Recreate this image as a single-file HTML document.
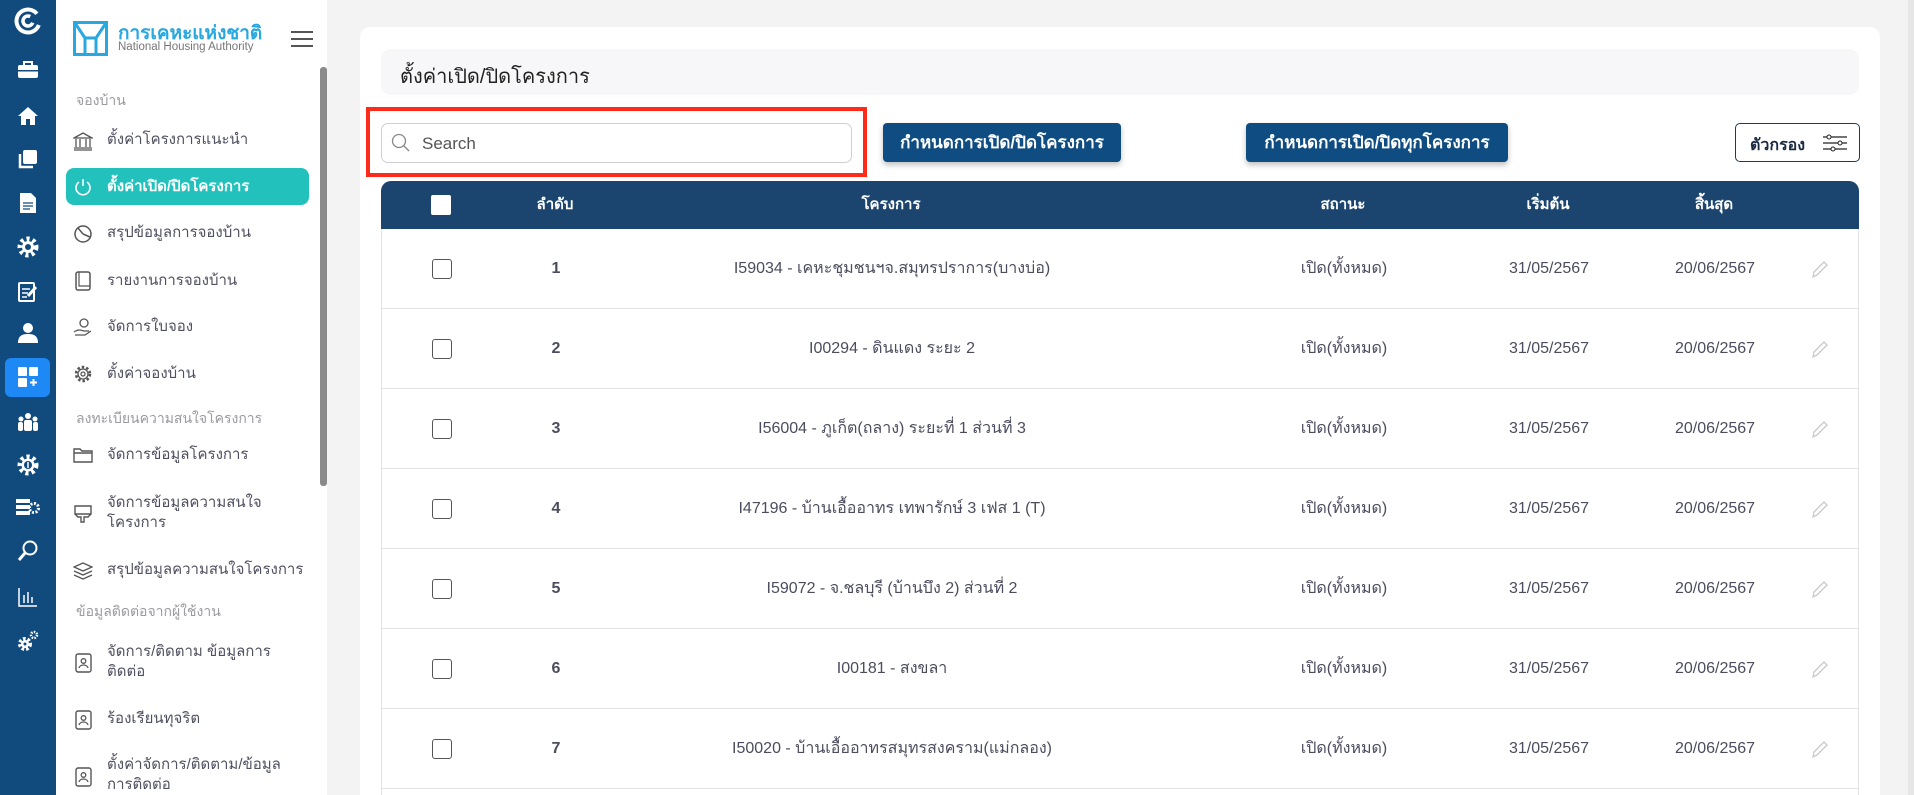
<!DOCTYPE html>
<html style="width:1914px;height:795px;overflow:hidden"><head><meta charset="utf-8">
<style>
*{box-sizing:border-box;margin:0;padding:0}
body{width:1914px;height:795px;overflow:hidden;background:#f3f3f4;font-family:"Liberation Sans","Noto Sans CJK SC",sans-serif;position:relative}
.rail{position:absolute;left:0;top:0;width:56px;height:795px;background:#114b7e}
.ri{position:absolute;left:0;width:56px;display:flex;justify-content:center;align-items:center}
.side{position:absolute;left:56px;top:0;width:271px;height:795px;background:#fff}
.sb{position:absolute;left:320px;top:67px;width:7px;height:419px;background:#8a8a8a;border-radius:3px}
.sec{position:absolute;left:76px;font-size:14px;color:#9a9aa0}
.it{position:absolute;left:107px;font-size:15px;color:#4f5060;line-height:20px}
.ic{position:absolute;left:73px;width:20px;height:20px}
.active{position:absolute;left:66px;top:168px;width:243px;height:37px;background:#22c1bc;border-radius:8px}
.card{position:absolute;left:360px;top:27px;width:1520px;height:768px;background:#fff;border-radius:10px 10px 0 0}
.title{position:absolute;left:381px;top:49px;width:1478px;height:46px;background:#f7f7f9;border-radius:10px;font-size:20px;color:#222;padding:11px 0 0 19px}
.red{position:absolute;left:366px;top:107px;width:501px;height:70px;border:4px solid #ff2a1a}
.search{position:absolute;left:381px;top:123px;width:471px;height:40px;border:1px solid #cfcfd4;border-radius:7px;font-size:17px;color:#555;padding:10px 0 0 40px}
.btn{position:absolute;top:123px;height:39px;background:#0f4c81;color:#fff;font-weight:bold;font-size:17px;border-radius:4px;display:flex;align-items:center;justify-content:center;box-shadow:0 3px 6px rgba(0,0,0,.25)}
.filter{position:absolute;left:1735px;top:123px;width:125px;height:39px;border:1.5px solid #1a3b5e;border-radius:5px;font-size:16px;font-weight:bold;color:#1a2a44;padding:9px 0 0 14px}
.thead{position:absolute;left:381px;top:181px;width:1478px;height:48px;background:#1b456e;border-radius:10px 10px 0 0;color:#fff;font-weight:bold;font-size:15px}
.tbody{position:absolute;left:381px;top:229px;width:1478px;height:566px;border-left:1px solid #e2e2e6;border-right:1px solid #e2e2e6;overflow:hidden}
.c{position:absolute;transform:translateX(-50%);white-space:nowrap;line-height:20px}
.row{position:absolute;left:0;width:1476px;height:80px;border-bottom:1.5px solid #e2e2e6;font-size:16px;color:#4b4c5e}
.row .c{top:30px}
.cb{position:absolute;left:50px;top:30px;width:20px;height:20px;border:1.5px solid #555;border-radius:3px;background:#fff}
</style></head><body>
<div class="rail">
 <div class="ri" style="top:6px;height:30px"><svg width="30" height="30" viewBox="0 0 30 30"><circle cx="15" cy="15" r="11.5" fill="none" stroke="#fff" stroke-width="4" stroke-dasharray="60 12" transform="rotate(20 15 15)"/><circle cx="15" cy="15" r="5" fill="none" stroke="#fff" stroke-width="3.5" stroke-dasharray="24 8" transform="rotate(20 15 15)"/></svg></div>
 <div class="ri" style="top:60px;height:20px"><svg width="22" height="18"><rect x="1" y="4" width="20" height="13" rx="2" fill="#fff"/><rect x="7" y="1" width="8" height="4" fill="none" stroke="#fff" stroke-width="2"/><rect x="1" y="9" width="20" height="1.5" fill="#114b7e"/></svg></div>
 <div class="ri" style="top:105px;height:22px"><svg width="22" height="20"><path d="M11 1L1 10h3v9h5v-6h4v6h5v-9h3z" fill="#fff"/></svg></div>
 <div class="ri" style="top:149px;height:20px"><svg width="20" height="20"><rect x="5" y="1" width="14" height="14" rx="2" fill="#fff"/><path d="M2 5v13h13" fill="none" stroke="#fff" stroke-width="2.5"/></svg></div>
 <div class="ri" style="top:192px;height:22px"><svg width="18" height="22"><path d="M1 1h11l5 5v15H1z" fill="#fff"/><path d="M4 11h10M4 14h10M4 17h7" stroke="#114b7e" stroke-width="1.3"/></svg></div>
 <div class="ri" style="top:236px;height:22px"><svg width="22" height="22"><circle cx="11" cy="11" r="8" fill="none" stroke="#fff" stroke-width="5" stroke-dasharray="3 3"/><circle cx="11" cy="11" r="6" fill="#fff"/><circle cx="11" cy="11" r="3" fill="#114b7e"/></svg></div>
 <div class="ri" style="top:280px;height:22px"><svg width="22" height="22"><rect x="2" y="3" width="15" height="18" rx="1" fill="none" stroke="#fff" stroke-width="2"/><path d="M5 9h8M5 13h6M5 17h5" stroke="#fff" stroke-width="1.5"/><path d="M19 7l-8 9" stroke="#fff" stroke-width="3"/></svg></div>
 <div class="ri" style="top:322px;height:22px"><svg width="22" height="22"><circle cx="11" cy="6" r="5" fill="#fff"/><path d="M1 21c0-7 4-9 10-9s10 2 10 9z" fill="#fff"/></svg></div>
 <div style="position:absolute;left:5px;top:358px;width:45px;height:39px;background:#1e88f5;border-radius:6px"></div>
 <div class="ri" style="top:367px;height:20px"><svg width="20" height="20"><rect x="0" y="0" width="9" height="9" rx="1" fill="#fff"/><rect x="11" y="0" width="9" height="9" rx="1" fill="#fff"/><rect x="0" y="11" width="9" height="9" rx="1" fill="#fff"/><path d="M15.5 12v7M12 15.5h7" stroke="#fff" stroke-width="2"/></svg></div>
 <div class="ri" style="top:412px;height:20px"><svg width="22" height="20"><circle cx="11" cy="4" r="3" fill="#fff"/><circle cx="4" cy="7" r="2.5" fill="#fff"/><circle cx="18" cy="7" r="2.5" fill="#fff"/><rect x="7" y="8" width="8" height="11" rx="2" fill="#fff"/><rect x="1" y="10" width="5" height="9" rx="2" fill="#fff"/><rect x="16" y="10" width="5" height="9" rx="2" fill="#fff"/></svg></div>
 <div class="ri" style="top:454px;height:22px"><svg width="22" height="22"><circle cx="11" cy="11" r="8" fill="none" stroke="#fff" stroke-width="5" stroke-dasharray="3 3"/><circle cx="11" cy="11" r="6.5" fill="#fff"/><circle cx="11" cy="11" r="4" fill="#114b7e"/><path d="M11 8v6" stroke="#fff" stroke-width="1.5"/></svg></div>
 <div class="ri" style="top:497px;height:20px"><svg width="24" height="20"><rect x="0" y="2" width="14" height="4" fill="#fff"/><rect x="0" y="8" width="14" height="4" fill="#fff"/><rect x="0" y="14" width="14" height="4" fill="#fff"/><circle cx="18" cy="11" r="4.5" fill="none" stroke="#fff" stroke-width="3" stroke-dasharray="2 1.5"/></svg></div>
 <div class="ri" style="top:540px;height:22px"><svg width="22" height="22"><circle cx="13" cy="8" r="6.5" fill="none" stroke="#fff" stroke-width="2"/><path d="M8 13L2 20" stroke="#fff" stroke-width="3"/></svg></div>
 <div class="ri" style="top:586px;height:22px"><svg width="20" height="20"><path d="M1 1v18h18M6 16V8M10 16V5M14 16V10" stroke="#fff" stroke-width="1.5" fill="none"/></svg></div>
 <div class="ri" style="top:630px;height:22px"><svg width="22" height="22"><circle cx="8" cy="14" r="5" fill="none" stroke="#fff" stroke-width="4" stroke-dasharray="2.5 1.8"/><circle cx="8" cy="14" r="4" fill="#fff"/><circle cx="8" cy="14" r="1.5" fill="#114b7e"/><circle cx="17" cy="5" r="3" fill="none" stroke="#fff" stroke-width="2.5" stroke-dasharray="1.5 1.2"/></svg></div>
</div>

<div class="side">
 <svg style="position:absolute;left:17px;top:21px" width="35" height="35" viewBox="0 0 35 35"><rect x="1.5" y="1.5" width="32" height="32" fill="none" stroke="#29a8e0" stroke-width="3"/><path d="M2 2L12 17v16M33 2L23 17v16M12 17h11" fill="none" stroke="#29a8e0" stroke-width="3"/></svg>
 <div style="position:absolute;left:62px;top:18px;font-size:19px;font-weight:bold;color:#29a8e0">การเคหะแห่งชาติ</div>
 <div style="position:absolute;left:62px;top:41px;font-size:11.5px;color:#777">National Housing Authority</div>
 <div style="position:absolute;left:235px;top:31px;width:22px;height:16px;border-top:2px solid #555;border-bottom:2px solid #555"><div style="margin-top:5px;height:2px;background:#555"></div></div>
</div>
<div class="sb"></div>
<div class="active"></div>
<div class="sec" style="top:90px">จองบ้าน</div>
<svg class="ic" style="top:131px" viewBox="0 0 20 20"><path d="M1 7L10 2l9 5zM3 8v8M7 8v8M13 8v8M17 8v8M1 17h18M1 19h18" fill="none" stroke="#555" stroke-width="1.3"/></svg>
<div class="it" style="top:130px">ตั้งค่าโครงการแนะนำ</div>
<svg class="ic" style="top:177px" viewBox="0 0 20 20"><path d="M6 5a7 7 0 1 0 8 0M10 2v7" fill="none" stroke="#fff" stroke-width="1.6"/></svg>
<div class="it" style="top:177px;color:#fff;font-weight:bold">ตั้งค่าเปิด/ปิดโครงการ</div>
<svg class="ic" style="top:224px" viewBox="0 0 20 20"><circle cx="10" cy="10" r="8" fill="none" stroke="#555" stroke-width="1.5"/><path d="M10 10L5 4M10 10l7 3" stroke="#555" stroke-width="1.5"/></svg>
<div class="it" style="top:223px">สรุปข้อมูลการจองบ้าน</div>
<svg class="ic" style="top:271px" viewBox="0 0 20 20"><rect x="3" y="1" width="14" height="18" rx="2" fill="none" stroke="#555" stroke-width="1.5"/><path d="M6 1v14h11" fill="none" stroke="#555" stroke-width="1.2"/></svg>
<div class="it" style="top:271px">รายงานการจองบ้าน</div>
<svg class="ic" style="top:317px" viewBox="0 0 20 20"><circle cx="11" cy="6" r="4" fill="none" stroke="#555" stroke-width="1.3"/><path d="M1 15c4-3 7-2 10-1h5M2 18h10l6-4" fill="none" stroke="#555" stroke-width="1.3"/></svg>
<div class="it" style="top:317px">จัดการใบจอง</div>
<svg class="ic" style="top:364px" viewBox="0 0 20 20"><circle cx="10" cy="10" r="7" fill="none" stroke="#555" stroke-width="2.5" stroke-dasharray="2.5 2"/><circle cx="10" cy="10" r="5" fill="none" stroke="#555" stroke-width="1.3"/><circle cx="10" cy="10" r="2" fill="none" stroke="#555" stroke-width="1.3"/></svg>
<div class="it" style="top:364px">ตั้งค่าจองบ้าน</div>
<div class="sec" style="top:408px">ลงทะเบียนความสนใจโครงการ</div>
<svg class="ic" style="top:445px" viewBox="0 0 20 20"><path d="M1 4h6l2 2h10v11H1z M1 8h18" fill="none" stroke="#555" stroke-width="1.4"/></svg>
<div class="it" style="top:445px">จัดการข้อมูลโครงการ</div>
<svg class="ic" style="top:504px" viewBox="0 0 20 20"><path d="M2 2h16v8H2zM2 10l3 3h3v5h3v-5h4l3-3" fill="none" stroke="#555" stroke-width="1.4"/></svg>
<div class="it" style="top:493px">จัดการข้อมูลความสนใจ<br>โครงการ</div>
<svg class="ic" style="top:561px" viewBox="0 0 20 20"><path d="M10 2l9 4-9 4-9-4zM1 10l9 4 9-4M1 14l9 4 9-4" fill="none" stroke="#555" stroke-width="1.3"/></svg>
<div class="it" style="top:560px">สรุปข้อมูลความสนใจโครงการ</div>
<div class="sec" style="top:601px">ข้อมูลติดต่อจากผู้ใช้งาน</div>
<svg class="ic" style="top:653px" viewBox="0 0 20 20"><rect x="3" y="1" width="15" height="18" rx="2" fill="none" stroke="#555" stroke-width="1.4"/><circle cx="10.5" cy="8" r="2.3" fill="none" stroke="#555" stroke-width="1.3"/><path d="M6 15c1-4 8-4 9 0" fill="none" stroke="#555" stroke-width="1.3"/></svg>
<div class="it" style="top:642px">จัดการ/ติดตาม ข้อมูลการ<br>ติดต่อ</div>
<svg class="ic" style="top:710px" viewBox="0 0 20 20"><rect x="3" y="1" width="15" height="18" rx="2" fill="none" stroke="#555" stroke-width="1.4"/><circle cx="10.5" cy="8" r="2.3" fill="none" stroke="#555" stroke-width="1.3"/><path d="M6 15c1-4 8-4 9 0" fill="none" stroke="#555" stroke-width="1.3"/></svg>
<div class="it" style="top:709px">ร้องเรียนทุจริต</div>
<svg class="ic" style="top:767px" viewBox="0 0 20 20"><rect x="3" y="1" width="15" height="18" rx="2" fill="none" stroke="#555" stroke-width="1.4"/><circle cx="10.5" cy="8" r="2.3" fill="none" stroke="#555" stroke-width="1.3"/><path d="M6 15c1-4 8-4 9 0" fill="none" stroke="#555" stroke-width="1.3"/></svg>
<div class="it" style="top:755px">ตั้งค่าจัดการ/ติดตาม/ข้อมูล<br>การติดต่อ</div>

<div style="position:absolute;left:1908px;top:0;width:6px;height:795px;background:#e6e6e6"></div>
<div class="card"></div>
<div class="title">ตั้งค่าเปิด/ปิดโครงการ</div>
<div class="red"></div>
<div class="search">Search</div>
<svg style="position:absolute;left:391px;top:133px" width="20" height="20"><circle cx="8" cy="8" r="6.5" fill="none" stroke="#888" stroke-width="1.3"/><path d="M13 13l5 5" stroke="#888" stroke-width="1.3"/></svg>
<div class="btn" style="left:883px;width:238px">กำหนดการเปิด/ปิดโครงการ</div>
<div class="btn" style="left:1246px;width:262px">กำหนดการเปิด/ปิดทุกโครงการ</div>
<div class="filter">ตัวกรอง</div>
<svg style="position:absolute;left:1822px;top:133px" width="26" height="20"><path d="M1 4h24M1 10h24M1 16h24" stroke="#222" stroke-width="1.2"/><circle cx="7" cy="4" r="2" fill="#fff" stroke="#222"/><circle cx="18" cy="10" r="2" fill="#fff" stroke="#222"/><circle cx="11" cy="16" r="2" fill="#fff" stroke="#222"/></svg>
<div class="thead">
 <div style="position:absolute;left:50px;top:14px;width:20px;height:20px;background:#fff;border-radius:2px"></div>
 <div class="c" style="left:174px;top:14px">ลำดับ</div>
 <div class="c" style="left:510px;top:14px">โครงการ</div>
 <div class="c" style="left:962px;top:14px">สถานะ</div>
 <div class="c" style="left:1167px;top:14px">เริ่มต้น</div>
 <div class="c" style="left:1333px;top:14px">สิ้นสุด</div>
</div>
<div class="tbody">
 <div class="row" style="top:0"><div class="cb"></div><div class="c" style="left:174px;font-weight:bold">1</div><div class="c" style="left:510px">I59034 - เคหะชุมชนฯจ.สมุทรปราการ(บางบ่อ)</div><div class="c" style="left:962px">เปิด(ทั้งหมด)</div><div class="c" style="left:1167px">31/05/2567</div><div class="c" style="left:1333px">20/06/2567</div><svg style="position:absolute;left:1428px;top:30px" width="20" height="20"><path d="M3 18l1-5L14 3l3 3L7 16z" fill="none" stroke="#c8c8c8" stroke-width="1.3"/></svg></div>
 <div class="row" style="top:80px"><div class="cb"></div><div class="c" style="left:174px;font-weight:bold">2</div><div class="c" style="left:510px">I00294 - ดินแดง ระยะ 2</div><div class="c" style="left:962px">เปิด(ทั้งหมด)</div><div class="c" style="left:1167px">31/05/2567</div><div class="c" style="left:1333px">20/06/2567</div><svg style="position:absolute;left:1428px;top:30px" width="20" height="20"><path d="M3 18l1-5L14 3l3 3L7 16z" fill="none" stroke="#c8c8c8" stroke-width="1.3"/></svg></div>
 <div class="row" style="top:160px"><div class="cb"></div><div class="c" style="left:174px;font-weight:bold">3</div><div class="c" style="left:510px">I56004 - ภูเก็ต(ถลาง) ระยะที่ 1 ส่วนที่ 3</div><div class="c" style="left:962px">เปิด(ทั้งหมด)</div><div class="c" style="left:1167px">31/05/2567</div><div class="c" style="left:1333px">20/06/2567</div><svg style="position:absolute;left:1428px;top:30px" width="20" height="20"><path d="M3 18l1-5L14 3l3 3L7 16z" fill="none" stroke="#c8c8c8" stroke-width="1.3"/></svg></div>
 <div class="row" style="top:240px"><div class="cb"></div><div class="c" style="left:174px;font-weight:bold">4</div><div class="c" style="left:510px">I47196 - บ้านเอื้ออาทร เทพารักษ์ 3 เฟส 1 (T)</div><div class="c" style="left:962px">เปิด(ทั้งหมด)</div><div class="c" style="left:1167px">31/05/2567</div><div class="c" style="left:1333px">20/06/2567</div><svg style="position:absolute;left:1428px;top:30px" width="20" height="20"><path d="M3 18l1-5L14 3l3 3L7 16z" fill="none" stroke="#c8c8c8" stroke-width="1.3"/></svg></div>
 <div class="row" style="top:320px"><div class="cb"></div><div class="c" style="left:174px;font-weight:bold">5</div><div class="c" style="left:510px">I59072 - จ.ชลบุรี (บ้านบึง 2) ส่วนที่ 2</div><div class="c" style="left:962px">เปิด(ทั้งหมด)</div><div class="c" style="left:1167px">31/05/2567</div><div class="c" style="left:1333px">20/06/2567</div><svg style="position:absolute;left:1428px;top:30px" width="20" height="20"><path d="M3 18l1-5L14 3l3 3L7 16z" fill="none" stroke="#c8c8c8" stroke-width="1.3"/></svg></div>
 <div class="row" style="top:400px"><div class="cb"></div><div class="c" style="left:174px;font-weight:bold">6</div><div class="c" style="left:510px">I00181 - สงขลา</div><div class="c" style="left:962px">เปิด(ทั้งหมด)</div><div class="c" style="left:1167px">31/05/2567</div><div class="c" style="left:1333px">20/06/2567</div><svg style="position:absolute;left:1428px;top:30px" width="20" height="20"><path d="M3 18l1-5L14 3l3 3L7 16z" fill="none" stroke="#c8c8c8" stroke-width="1.3"/></svg></div>
 <div class="row" style="top:480px"><div class="cb"></div><div class="c" style="left:174px;font-weight:bold">7</div><div class="c" style="left:510px">I50020 - บ้านเอื้ออาทรสมุทรสงคราม(แม่กลอง)</div><div class="c" style="left:962px">เปิด(ทั้งหมด)</div><div class="c" style="left:1167px">31/05/2567</div><div class="c" style="left:1333px">20/06/2567</div><svg style="position:absolute;left:1428px;top:30px" width="20" height="20"><path d="M3 18l1-5L14 3l3 3L7 16z" fill="none" stroke="#c8c8c8" stroke-width="1.3"/></svg></div>
</div>
</body></html>
